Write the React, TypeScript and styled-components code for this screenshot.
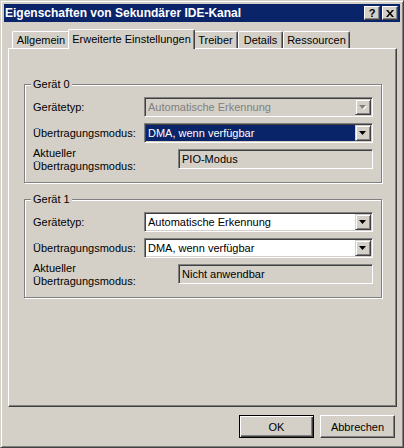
import styled, { createGlobalStyle } from 'styled-components';

const FACE = '#d4d0c8';
const SHADOW = '#808080';
const DARK = '#404040';
const NAVY = '#0a246a';

const GlobalStyle = createGlobalStyle`
  html, body {
    margin: 0;
    padding: 0;
    background: ${FACE};
  }
  * {
    box-sizing: border-box;
  }
`;

const Window = styled.div`
  width: 404px;
  height: 448px;
  display: flex;
  flex-direction: column;
  padding: 3px;
  background: ${FACE};
  border: 1px solid;
  border-color: ${FACE} ${DARK} ${DARK} ${FACE};
  box-shadow: inset 1px 1px 0 #fff, inset -1px -1px 0 ${SHADOW};
  font-family: 'Liberation Sans', Arial, sans-serif;
  font-size: 11px;
  color: #000;
`;

const TitleBar = styled.div`
  height: 18px;
  display: flex;
  align-items: center;
  justify-content: space-between;
  padding: 0 2px 0 1px;
  background: ${NAVY};
  color: #fff;
  font-weight: bold;
  font-size: 12px;
`;

const TitleButtons = styled.div`
  display: flex;
  gap: 2px;
`;

const CaptionButton = styled.div`
  width: 16px;
  height: 14px;
  display: flex;
  align-items: center;
  justify-content: center;
  background: ${FACE};
  color: #000;
  font-weight: bold;
  font-size: 11px;
  border: 1px solid;
  border-color: #fff ${DARK} ${DARK} #fff;
  box-shadow: inset -1px -1px 0 ${SHADOW};
`;

const TabStrip = styled.div`
  height: 19px;
  margin-top: 7px;
  padding-left: 8px;
  display: flex;
  align-items: flex-end;
`;

const Tab = styled.div<{ $width: number; $active?: boolean }>`
  position: relative;
  width: ${(p) => p.$width + (p.$active ? 4 : 0)}px;
  height: ${(p) => (p.$active ? 20 : 17)}px;
  margin: 0 ${(p) => (p.$active ? -2 : 0)}px ${(p) => (p.$active ? -1 : 0)}px;
  z-index: ${(p) => (p.$active ? 2 : 1)};
  display: flex;
  align-items: center;
  justify-content: center;
  padding-bottom: ${(p) => (p.$active ? 2 : 0)}px;
  background: ${FACE};
  border-top: 1px solid #fff;
  border-left: 1px solid #fff;
  border-right: 1px solid ${DARK};
  border-radius: 2px 2px 0 0;
  box-shadow: inset -1px 0 0 ${SHADOW};
  white-space: nowrap;
`;

const Panel = styled.div`
  height: 359px;
  margin: 0 3px 0 4px;
  padding: 35px 14px 0 15px;
  display: flex;
  flex-direction: column;
  gap: 16px;
  border: 1px solid;
  border-color: #fff ${DARK} ${DARK} #fff;
  box-shadow: inset -1px -1px 0 ${SHADOW};
`;

const Group = styled.div`
  position: relative;
  display: grid;
  grid-template-columns: 111px 1fr;
  grid-auto-rows: 20px;
  row-gap: 6px;
  align-items: center;
  padding: 12px 8px 13px 8px;
  border: 1px solid ${SHADOW};
  box-shadow: inset 1px 1px 0 #fff, 1px 1px 0 #fff;
`;

const Legend = styled.span`
  position: absolute;
  top: -7px;
  left: 6px;
  padding: 0 2px;
  background: ${FACE};
  line-height: 13px;
`;

const Label = styled.div<{ $twoLines?: boolean }>`
  line-height: 13px;
  margin: ${(p) => (p.$twoLines ? '-2px 0 -4px' : '0')};
`;

const Sunken = styled.div<{ $indent?: number; $disabled?: boolean }>`
  height: 20px;
  margin-left: ${(p) => p.$indent ?? 0}px;
  display: flex;
  border: 1px solid;
  border-color: ${SHADOW} #fff #fff ${SHADOW};
  box-shadow: inset 1px 1px 0 ${DARK}, inset -1px -1px 0 ${FACE};
  padding: 1px;
  background: ${(p) => (p.$disabled ? FACE : '#fff')};
`;

const Field = styled(Sunken)`
  background: ${FACE};
`;

const Value = styled.div<{ $selected?: boolean; $disabled?: boolean }>`
  flex: 1;
  display: flex;
  align-items: center;
  padding-left: 2px;
  background: ${(p) => (p.$selected ? NAVY : 'transparent')};
  color: ${(p) => (p.$selected ? '#fff' : p.$disabled ? SHADOW : '#000')};
  white-space: nowrap;
`;

const DropButton = styled.div`
  width: 16px;
  display: flex;
  align-items: center;
  justify-content: center;
  background: ${FACE};
  border: 1px solid;
  border-color: ${FACE} ${DARK} ${DARK} ${FACE};
  box-shadow: inset 1px 1px 0 #fff, inset -1px -1px 0 ${SHADOW};
`;

const ButtonRow = styled.div`
  display: flex;
  justify-content: flex-end;
  gap: 6px;
  margin: 8px 5px 0 0;
`;

const Button = styled.div<{ $default?: boolean }>`
  width: 75px;
  height: 23px;
  display: flex;
  align-items: center;
  justify-content: center;
  background: ${FACE};
  border: 1px solid;
  border-color: ${(p) =>
    p.$default ? '#000' : `#fff ${DARK} ${DARK} #fff`};
  box-shadow: ${(p) =>
    p.$default
      ? `inset 1px 1px 0 #fff, inset -1px -1px 0 ${DARK}, inset -2px -2px 0 ${SHADOW}`
      : `inset -1px -1px 0 ${SHADOW}`};
`;

function Arrow({ disabled }: { disabled?: boolean }) {
  return (
    <svg width="8" height="5" viewBox="0 0 8 5">
      {disabled && <polygon points="1,1 8,1 4.5,5" fill="#fff" />}
      <polygon points="0,0 7,0 3.5,4" fill={disabled ? SHADOW : '#000'} />
    </svg>
  );
}

function Combo({
  value,
  selected,
  disabled,
}: {
  value: string;
  selected?: boolean;
  disabled?: boolean;
}) {
  return (
    <Sunken $disabled={disabled}>
      <Value $selected={selected} $disabled={disabled}>
        {value}
      </Value>
      <DropButton>
        <Arrow disabled={disabled} />
      </DropButton>
    </Sunken>
  );
}

type Device = {
  name: string;
  typeDisabled?: boolean;
  modeSelected?: boolean;
  current: string;
};

const devices: Device[] = [
  { name: 'Gerät 0', typeDisabled: true, modeSelected: true, current: 'PIO-Modus' },
  { name: 'Gerät 1', current: 'Nicht anwendbar' },
];

const tabs = [
  { label: 'Allgemein', width: 58 },
  { label: 'Erweiterte Einstellungen', width: 123, active: true },
  { label: 'Treiber', width: 45 },
  { label: 'Details', width: 45 },
  { label: 'Ressourcen', width: 67 },
];

export default function App() {
  return (
    <Window>
      <GlobalStyle />
      <TitleBar>
        <span>Eigenschaften von Sekundärer IDE-Kanal</span>
        <TitleButtons>
          <CaptionButton>?</CaptionButton>
          <CaptionButton>
            <svg width="8" height="7" viewBox="0 0 8 7">
              <path
                d="M0 0h2l2 2.5L6 0h2L5 3.5 8 7H6L4 4.5 2 7H0l3-3.5z"
                fill="#000"
              />
            </svg>
          </CaptionButton>
        </TitleButtons>
      </TitleBar>

      <TabStrip>
        {tabs.map((t) => (
          <Tab key={t.label} $width={t.width} $active={t.active}>
            {t.label}
          </Tab>
        ))}
      </TabStrip>

      <Panel>
        {devices.map((d) => (
          <Group key={d.name}>
            <Legend>{d.name}</Legend>
            <Label>Gerätetyp:</Label>
            <Combo value="Automatische Erkennung" disabled={d.typeDisabled} />
            <Label>Übertragungsmodus:</Label>
            <Combo value="DMA, wenn verfügbar" selected={d.modeSelected} />
            <Label $twoLines>
              Aktueller
              <br />
              Übertragungsmodus:
            </Label>
            <Field $indent={34}>
              <Value>{d.current}</Value>
            </Field>
          </Group>
        ))}
      </Panel>

      <ButtonRow>
        <Button $default>OK</Button>
        <Button>Abbrechen</Button>
      </ButtonRow>
    </Window>
  );
}
